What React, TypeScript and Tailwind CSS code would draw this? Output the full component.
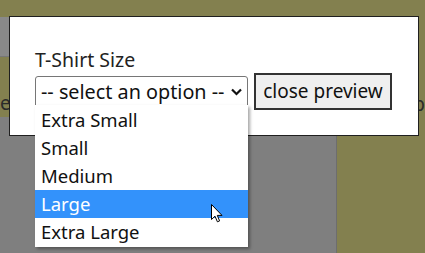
const sizes = ["Extra Small", "Small", "Medium", "Large", "Extra Large"];

function Chevron() {
  return (
    <svg width="11" height="8" viewBox="0 0 11 8" className="shrink-0">
      <path d="M1 1.5 L5.5 6 L10 1.5" fill="none" stroke="#111" strokeWidth="2.2" />
    </svg>
  );
}

function Cursor() {
  return (
    <svg width="13" height="20" viewBox="0 0 13 20" className="absolute left-[211px] top-[204px]">
      <path
        d="M0.5 0.5 L0.5 15.5 L4 12.2 L6.4 17.8 L8.6 16.9 L6.3 11.4 L11 11.4 Z"
        fill="#fff"
        stroke="#000"
        strokeWidth="1"
        strokeLinejoin="round"
      />
    </svg>
  );
}

export default function App() {
  return (
    <div className="relative h-[253px] w-[425px] overflow-hidden bg-[#83804f] font-['Noto_Sans',sans-serif] text-[18px]">
      {/* page behind the preview */}
      <div className="h-[17px]" />
      <div className="flex h-[236px]">
        <div className="flex w-[342px] flex-col border-r border-[#6d6d6d]">
          <div className="h-[40px] border-b border-[#777] bg-[#898989]" />
          <div className="flex h-[60px] items-end pb-[4px] text-[19px] leading-none text-[#2a2a2a]">e</div>
          <div className="flex-1 bg-[#7f7f7f]" />
        </div>
        <div className="flex-1 pt-[78px] pl-[76px] text-[19px] leading-none text-[#2a2a2a]">p</div>
      </div>

      {/* preview dialog */}
      <div className="absolute left-[9px] top-[16px] h-[120px] w-[410px] border border-[#1f1f1f] bg-white pl-[25px] pt-[29px] text-[#222]">
        <div className="h-[27px] text-[19.5px] leading-[27px]">T-Shirt Size</div>
        <div className="flex items-center gap-[6px]">
          <div className="flex h-[32px] w-[213px] items-center justify-between rounded-[3px] border border-[#767676] pl-[5px] pr-[5px] text-[19.8px] text-[#111]">
            <span>-- select an option --</span>
            <Chevron />
          </div>
          <button className="h-[37px] w-[138px] border-2 border-[#333] bg-[#efefef] text-[19px] text-[#111]">
            close preview
          </button>
        </div>
      </div>

      {/* open select list */}
      <div className="absolute left-[35px] top-[105px] w-[213px] bg-white py-[1px] text-[18.5px] shadow-[2px_2px_3px_rgba(0,0,0,0.35)]">
        {sizes.map((s) => (
          <div
            key={s}
            className={`h-[28px] pl-[6px] leading-[28px] ${
              s === "Large" ? "bg-[#3392fb] text-white" : "text-[#111]"
            }`}
          >
            {s}
          </div>
        ))}
      </div>
      <Cursor />
    </div>
  );
}
